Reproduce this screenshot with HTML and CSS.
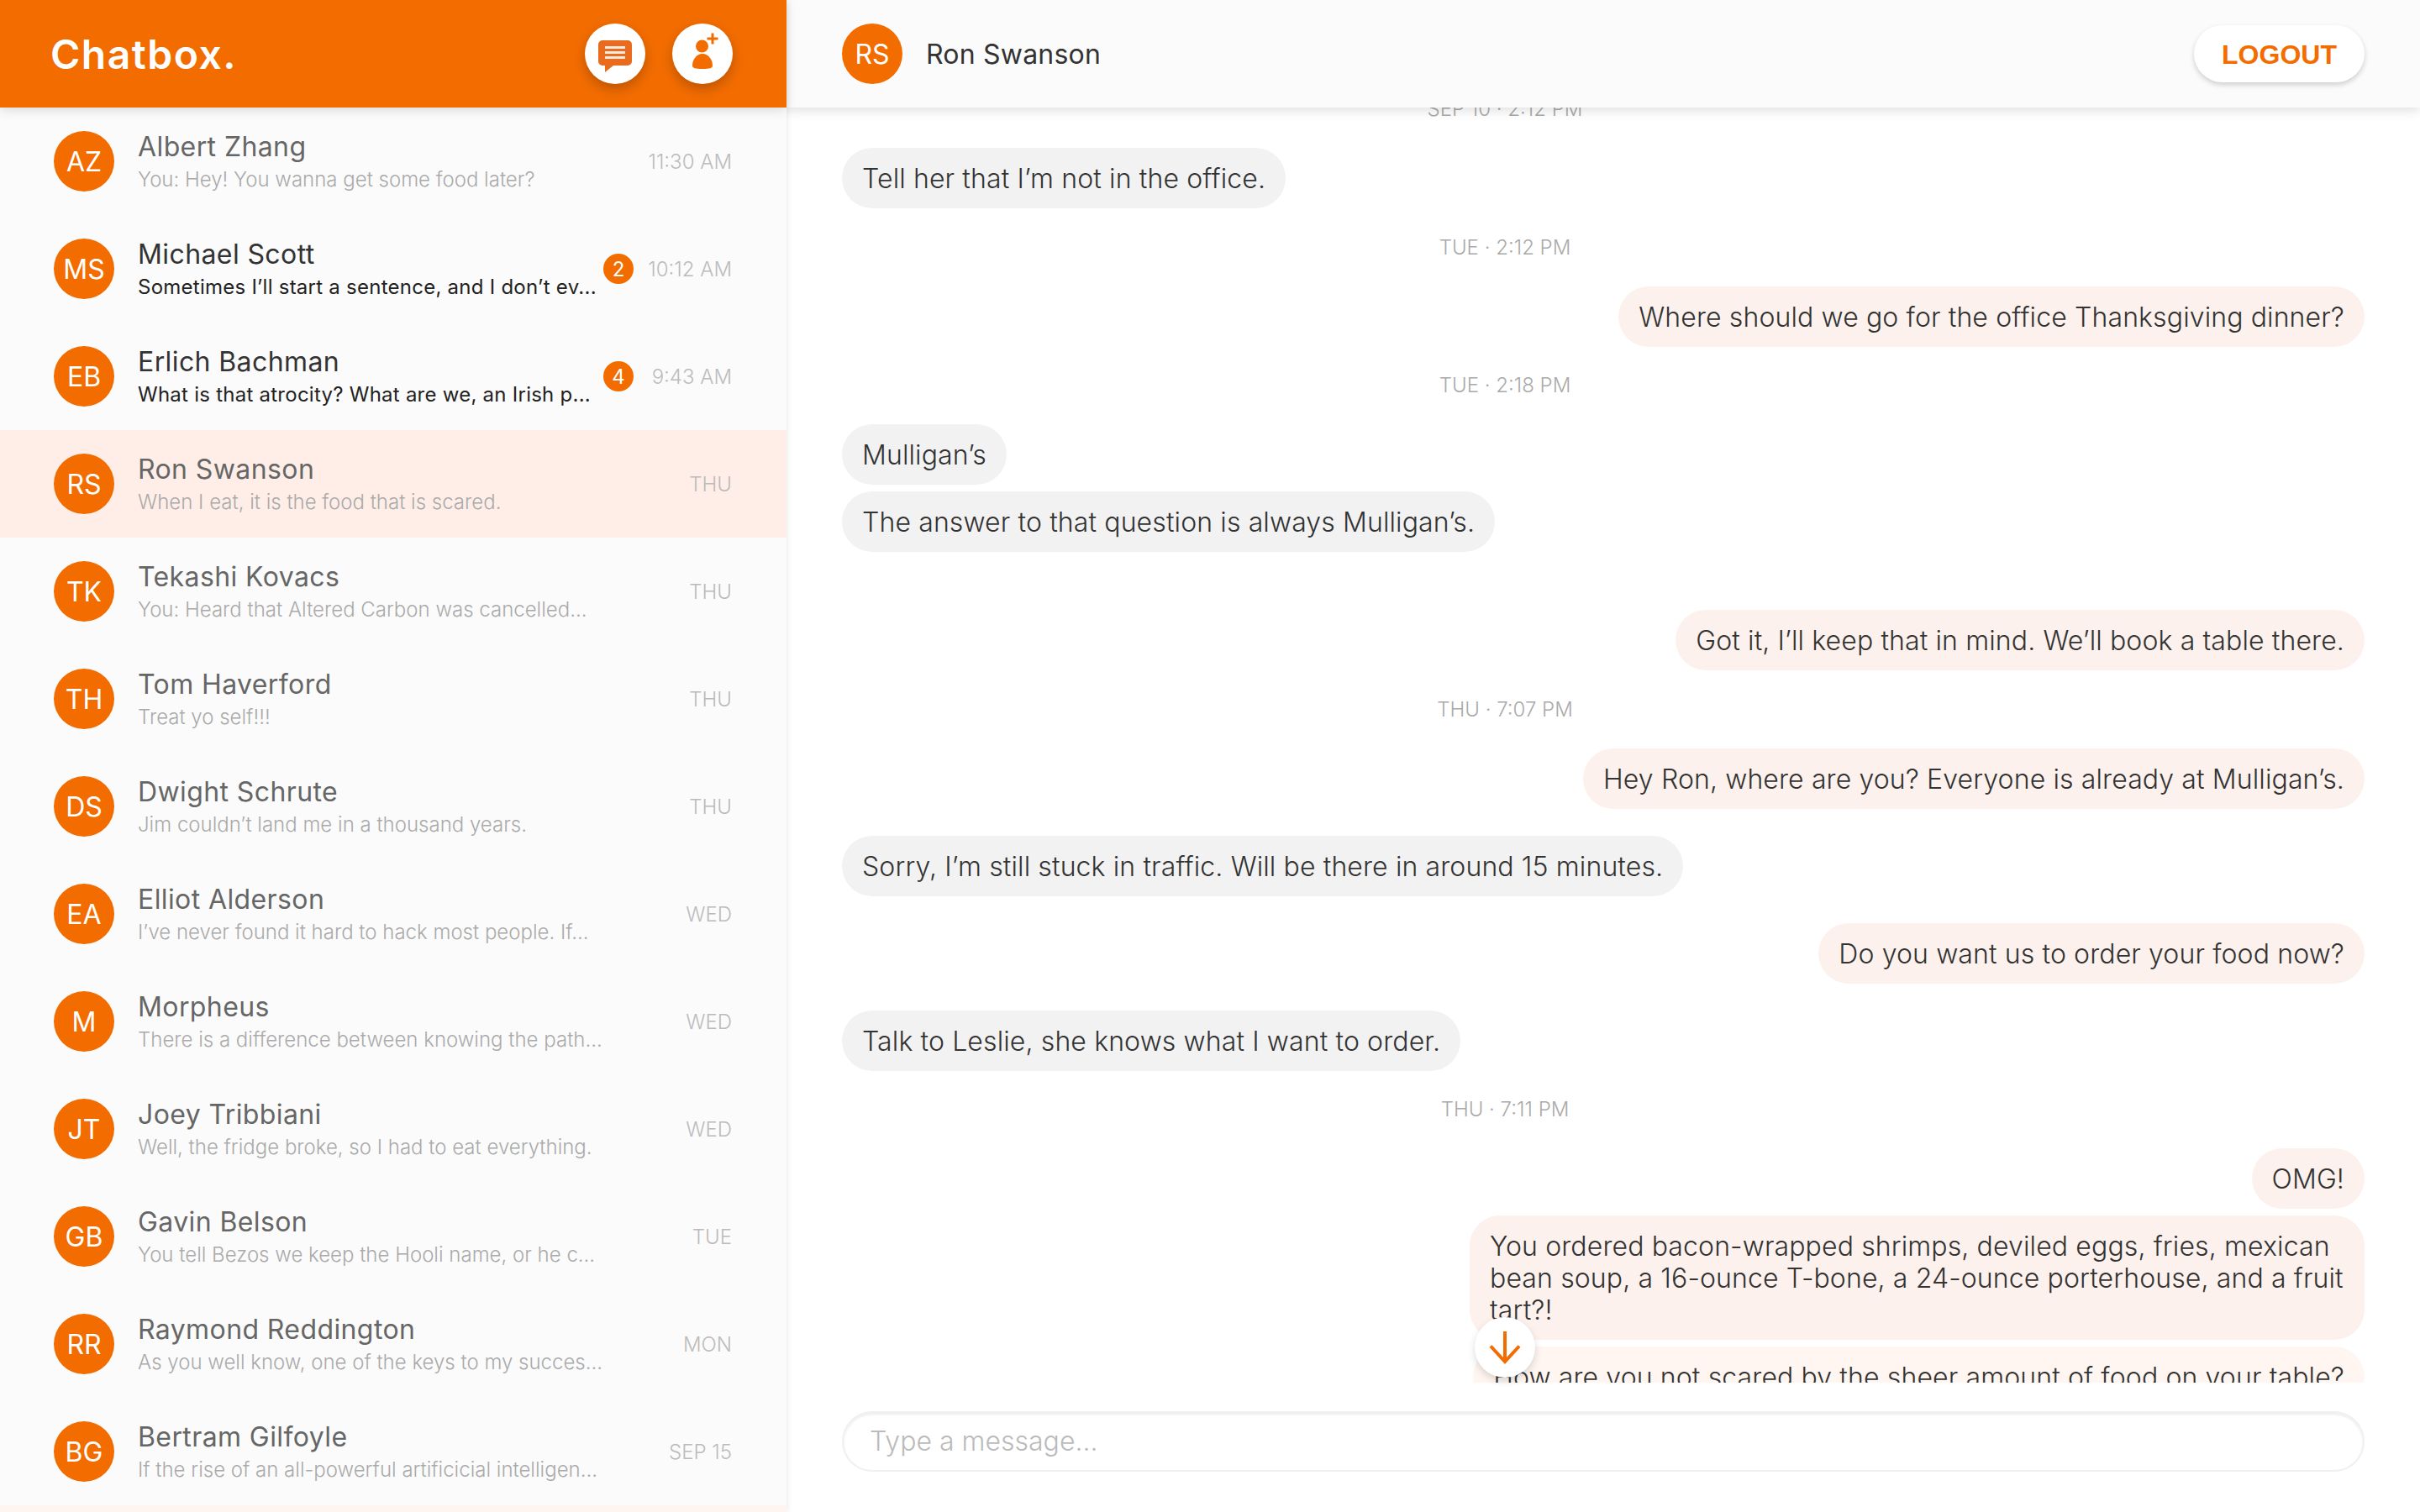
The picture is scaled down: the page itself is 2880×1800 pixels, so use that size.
FILE: index.html
```html
<!DOCTYPE html>
<html lang="en">
<head>
    <meta charset="UTF-8">
    <title>Chatbox</title>
    <link rel="stylesheet" href="styles.css">
</head>
<body>
    <div class="app">
        <aside class="sidebar">
            <header class="sidebarHeader">
                <div class="logo">Chatbox.</div>
                <button class="roundBtn">
                    <svg width="40" height="44" viewBox="0 -6 40 44">
                        <path d="M5 0H35A5 5 0 0 1 40 5V25A5 5 0 0 1 35 30H18L8 38V30H5A5 5 0 0 1 0 25V5A5 5 0 0 1 5 0Z" fill="#e96c1e"/>
                        <path d="M8 8.6H32M8 14.6H32M8 20.6H32" stroke="#fde9dc" stroke-width="3"/>
                    </svg>
                </button>
                <button class="roundBtn">
                    <svg width="40" height="52" viewBox="0 -4 40 52">
                        <circle cx="19.5" cy="13" r="7.5" fill="#f26c00"/>
                        <path d="M20 22C13 22 8 29 8 36C8 39 11 40 20 40C29 40 32 39 32 36C32 29 27 22 20 22Z" fill="#f26c00"/>
                        <path d="M25.5 4H38.5M32 -2.5V10.5" stroke="#f26c00" stroke-width="3"/>
                    </svg>
                </button>
            </header>
            <div class="convoList">
                <div class="convo">
                    <div class="avatar">AZ</div>
                    <div class="convoBody"><div class="convoName">Albert Zhang</div><div class="convoPreview">You: Hey! You wanna get some food later?</div></div>
                    <div class="convoTime">11:30 AM</div>
                </div>
                <div class="convo unread">
                    <div class="avatar">MS</div>
                    <div class="convoBody"><div class="convoName">Michael Scott</div><div class="convoPreview">Sometimes I’ll start a sentence, and I don’t ev...</div></div>
                    <div class="badge">2</div>
                    <div class="convoTime">10:12 AM</div>
                </div>
                <div class="convo unread">
                    <div class="avatar">EB</div>
                    <div class="convoBody"><div class="convoName">Erlich Bachman</div><div class="convoPreview">What is that atrocity? What are we, an Irish p...</div></div>
                    <div class="badge">4</div>
                    <div class="convoTime">9:43 AM</div>
                </div>
                <div class="convo selected">
                    <div class="avatar">RS</div>
                    <div class="convoBody"><div class="convoName">Ron Swanson</div><div class="convoPreview">When I eat, it is the food that is scared.</div></div>
                    <div class="convoTime">THU</div>
                </div>
                <div class="convo">
                    <div class="avatar">TK</div>
                    <div class="convoBody"><div class="convoName">Tekashi Kovacs</div><div class="convoPreview">You: Heard that Altered Carbon was cancelled...</div></div>
                    <div class="convoTime">THU</div>
                </div>
                <div class="convo">
                    <div class="avatar">TH</div>
                    <div class="convoBody"><div class="convoName">Tom Haverford</div><div class="convoPreview">Treat yo self!!!</div></div>
                    <div class="convoTime">THU</div>
                </div>
                <div class="convo">
                    <div class="avatar">DS</div>
                    <div class="convoBody"><div class="convoName">Dwight Schrute</div><div class="convoPreview">Jim couldn’t land me in a thousand years.</div></div>
                    <div class="convoTime">THU</div>
                </div>
                <div class="convo">
                    <div class="avatar">EA</div>
                    <div class="convoBody"><div class="convoName">Elliot Alderson</div><div class="convoPreview">I’ve never found it hard to hack most people. If...</div></div>
                    <div class="convoTime">WED</div>
                </div>
                <div class="convo">
                    <div class="avatar">M</div>
                    <div class="convoBody"><div class="convoName">Morpheus</div><div class="convoPreview">There is a difference between knowing the path...</div></div>
                    <div class="convoTime">WED</div>
                </div>
                <div class="convo">
                    <div class="avatar">JT</div>
                    <div class="convoBody"><div class="convoName">Joey Tribbiani</div><div class="convoPreview">Well, the fridge broke, so I had to eat everything.</div></div>
                    <div class="convoTime">WED</div>
                </div>
                <div class="convo">
                    <div class="avatar">GB</div>
                    <div class="convoBody"><div class="convoName">Gavin Belson</div><div class="convoPreview">You tell Bezos we keep the Hooli name, or he c...</div></div>
                    <div class="convoTime">TUE</div>
                </div>
                <div class="convo">
                    <div class="avatar">RR</div>
                    <div class="convoBody"><div class="convoName">Raymond Reddington</div><div class="convoPreview">As you well know, one of the keys to my succes...</div></div>
                    <div class="convoTime">MON</div>
                </div>
                <div class="convo">
                    <div class="avatar">BG</div>
                    <div class="convoBody"><div class="convoName">Bertram Gilfoyle</div><div class="convoPreview">If the rise of an all-powerful artificicial intelligen...</div></div>
                    <div class="convoTime">SEP 15</div>
                </div>
                <div class="convo peek"></div>
            </div>
        </aside>

        <main class="chat">
            <header class="chatHeader">
                <div class="avatar">RS</div>
                <div class="chatName">Ron Swanson</div>
                <button class="logoutBtn">LOGOUT</button>
            </header>
            <div class="messagesWrap">
                <div class="messages">
                    <div class="stamp">SEP 10 · 2:12 PM</div>
                    <div class="bubble theirs">Tell her that I’m not in the office.</div>
                    <div class="stamp">TUE · 2:12 PM</div>
                    <div class="bubble mine">Where should we go for the office Thanksgiving dinner?</div>
                    <div class="stamp">TUE · 2:18 PM</div>
                    <div class="bubble theirs">Mulligan’s</div>
                    <div class="bubble theirs same">The answer to that question is always Mulligan’s.</div>
                    <div class="bubble mine far">Got it, I’ll keep that in mind. We’ll book a table there.</div>
                    <div class="stamp">THU · 7:07 PM</div>
                    <div class="bubble mine">Hey Ron, where are you? Everyone is already at Mulligan’s.</div>
                    <div class="bubble theirs next">Sorry, I’m still stuck in traffic. Will be there in around 15 minutes.</div>
                    <div class="bubble mine next">Do you want us to order your food now?</div>
                    <div class="bubble theirs next">Talk to Leslie, she knows what I want to order.</div>
                    <div class="stamp">THU · 7:11 PM</div>
                    <div class="bubble mine">OMG!</div>
                    <div class="bubble mine same">You ordered bacon-wrapped shrimps, deviled eggs, fries, mexican bean soup, a 16-ounce T-bone, a 24-ounce porterhouse, and a fruit tart?!</div>
                    <div class="bubble mine same fresh">How are you not scared by the sheer amount of food on your table?</div>
                </div>
                <button class="scrollBtn">
                    <svg width="40" height="40" viewBox="0 0 40 40">
                        <path d="M20 1V36M3 18.5L20 37L37 18.5" fill="none" stroke="#f26c00" stroke-width="4"/>
                    </svg>
                </button>
            </div>
            <footer class="composer">
                <input class="composerInput" type="text" placeholder="Type a message...">
            </footer>
        </main>
    </div>
</body>
</html>
```

FILE: styles.css
```css
* {
    box-sizing: border-box;
}

body {
    margin: 0;
    padding: 0;
    background-color: white;
    font-family: Inter, "Liberation Sans", sans-serif;
    color: #333;
}

button {
    border: none;
    padding: 0;
    cursor: pointer;
}

.app {
    display: grid;
    grid-template-columns: 936px 1fr;
    width: 100vw;
    height: 100vh;
    overflow: hidden;
}

.avatar {
    display: flex;
    flex-shrink: 0;
    align-items: center;
    justify-content: center;
    width: 72px;
    height: 72px;
    border-radius: 50%;
    background-color: #f26c00;
    color: white;
    font-size: 32px;
}

/* left column */
.sidebar {
    position: relative;
    z-index: 2;
    display: flex;
    flex-direction: column;
    min-height: 0;
    background-color: #fbfbfb;
    box-shadow: 2px 0 6px rgba(0, 0, 0, 0.07);
}

.sidebarHeader {
    position: relative;
    z-index: 1;
    display: flex;
    flex-shrink: 0;
    align-items: center;
    gap: 32px;
    height: 128px;
    padding: 0 64px 0 60px;
    background-color: #f26c00;
    box-shadow: 0 4px 12px rgba(0, 0, 0, 0.12);
}

.logo {
    flex: 1;
    color: white;
    font-size: 48px;
    font-weight: 600;
    letter-spacing: 1.5px;
}

.roundBtn {
    display: flex;
    align-items: center;
    justify-content: center;
    width: 72px;
    height: 72px;
    border-radius: 50%;
    background-color: white;
    box-shadow: 0 6px 14px rgba(0, 0, 0, 0.22);
}

.convoList {
    flex: 1;
    min-height: 0;
    overflow: hidden;
}

.convo {
    display: flex;
    align-items: center;
    height: 128px;
    padding: 0 65px 0 64px;
}

.convo.selected {
    background-color: #ffeee7;
}

.convo.peek {
    background-color: #fff5f0;
}

.convoBody {
    flex-shrink: 0;
    width: 554px;
    margin-left: 28px;
}

.convoName {
    margin-bottom: 5px;
    color: #666;
    font-size: 32px;
    letter-spacing: 0.4px;
    line-height: 38px;
}

.convoPreview {
    color: #aaa;
    font-size: 24px;
    font-weight: 300;
    line-height: 30px;
    white-space: nowrap;
}

.unread .convoName {
    color: #333;
}

.unread .convoPreview {
    color: #222;
    font-weight: 400;
    letter-spacing: 0.25px;
}

.badge {
    display: flex;
    flex-shrink: 0;
    align-items: center;
    justify-content: center;
    width: 36px;
    height: 36px;
    border-radius: 50%;
    background-color: #f26c00;
    color: white;
    font-size: 24px;
}

.convoTime {
    flex: 1;
    color: #bbb;
    font-size: 24px;
    font-weight: 300;
    text-align: right;
    white-space: nowrap;
}

/* right column */
.chat {
    display: flex;
    flex-direction: column;
    min-width: 0;
    min-height: 0;
}

.chatHeader {
    position: relative;
    z-index: 1;
    display: flex;
    flex-shrink: 0;
    align-items: center;
    height: 128px;
    padding: 0 66px;
    background-color: #fbfbfb;
    box-shadow: 0 4px 12px rgba(0, 0, 0, 0.12);
}

.chatName {
    flex: 1;
    margin-left: 28px;
    font-size: 32px;
    letter-spacing: 0.2px;
}

.logoutBtn {
    width: 203px;
    height: 68px;
    padding-top: 2px;
    border-radius: 34px;
    background-color: white;
    box-shadow: 0 3px 6px rgba(0, 0, 0, 0.18);
    color: #f26c00;
    font-family: "Liberation Sans", sans-serif;
    font-size: 32px;
    font-weight: bold;
}

.messagesWrap {
    position: relative;
    flex: 1;
    min-height: 0;
}

.messages {
    display: flex;
    flex-direction: column;
    height: 100%;
    padding: 0 66px;
    overflow: hidden;
}

.stamp {
    flex-shrink: 0;
    height: 30px;
    margin: 31.5px 234px 31px 0;
    color: #aaa;
    font-size: 24px;
    font-weight: 300;
    line-height: 30px;
    text-align: center;
}

.stamp:first-child {
    margin-top: -13px;
}

.bubble {
    flex-shrink: 0;
    max-width: 1065px;
    padding: 18px 24px 16px;
    border-radius: 36px;
    font-size: 32px;
    font-weight: 300;
    letter-spacing: 0.12px;
    line-height: 38px;
}

.theirs {
    align-self: flex-start;
    background-color: #f2f2f2;
}

.mine {
    align-self: flex-end;
    background-color: #fcf1ec;
}

.bubble.same {
    margin-top: 8px;
}

.bubble.next {
    margin-top: 32px;
}

.bubble.far {
    margin-top: 69px;
}

.bubble.fresh {
    background-color: #fff6f1;
}

.scrollBtn {
    position: absolute;
    bottom: 6px;
    left: 819px;
    display: flex;
    align-items: center;
    justify-content: center;
    width: 72px;
    height: 72px;
    border-radius: 50%;
    background-color: white;
    box-shadow: 0 4px 10px rgba(0, 0, 0, 0.15);
}

.composer {
    flex-shrink: 0;
    height: 154px;
    padding: 34px 66px 0;
}

.composerInput {
    display: block;
    width: 100%;
    height: 72px;
    padding: 0 31px 2px;
    border: 2px solid #f0f0f0;
    border-radius: 36px;
    outline: none;
    box-shadow: inset 0 2px 3px rgba(0, 0, 0, 0.08);
    color: #333;
    font-family: Inter, "Liberation Sans", sans-serif;
    font-size: 32px;
    font-weight: 300;
}

.composerInput::placeholder {
    color: #bbb;
}
```
